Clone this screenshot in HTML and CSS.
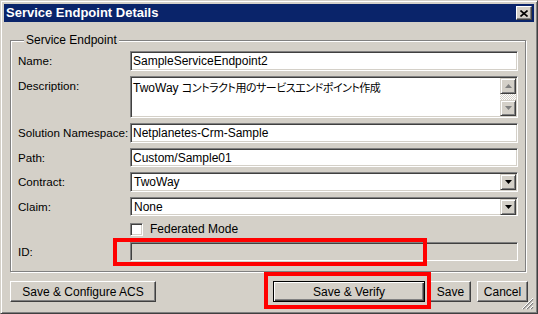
FILE: index.html
```html
<!DOCTYPE html>
<html lang="ja">
<head>
  <meta charset="UTF-8" />
  <title>Service Endpoint Details</title>
  <link rel="stylesheet" href="styles.css">
</head>
<body>

  <div class="window">
    <div class="titlebar">
      <span class="title">Service Endpoint Details</span>
      <button class="close-btn">
        <svg width="8" height="7" viewBox="0 0 8 7"><path d="M0.5 0.5L7.5 6.5M7.5 0.5L0.5 6.5" stroke="#000" stroke-width="1.6" fill="none"/></svg>
      </button>
    </div>

    <div class="content">
      <fieldset class="group">
        <legend>Service Endpoint</legend>
        <div class="form">
          <label>Name:</label>
          <div class="field">SampleServiceEndpoint2</div>

          <label>Description:</label>
          <div class="field memo">
            <div class="memo-text">TwoWay <span class="jp">コントラクト用のサービスエンドポイント作成</span></div>
            <div class="vscroll">
              <div class="sb-btn"><svg width="7" height="4" viewBox="0 0 7 4"><path d="M3.5 0L7 4H0Z" fill="#808080"/></svg></div>
              <div class="sb-track"></div>
              <div class="sb-btn"><svg width="7" height="4" viewBox="0 0 7 4"><path d="M0 0H7L3.5 4Z" fill="#808080"/></svg></div>
            </div>
          </div>

          <label>Solution Namespace:</label>
          <div class="field">Netplanetes-Crm-Sample</div>

          <label>Path:</label>
          <div class="field">Custom/Sample01</div>

          <label>Contract:</label>
          <div class="field select">
            <span>TwoWay</span>
            <div class="dd-btn"><svg width="7" height="4" viewBox="0 0 7 4"><path d="M0 0H7L3.5 4Z" fill="#000"/></svg></div>
          </div>

          <label>Claim:</label>
          <div class="field select">
            <span>None</span>
            <div class="dd-btn"><svg width="7" height="4" viewBox="0 0 7 4"><path d="M0 0H7L3.5 4Z" fill="#000"/></svg></div>
          </div>

          <span></span>
          <div class="check-row">
            <span class="checkbox"></span>
            <span>Federated Mode</span>
          </div>

          <label>ID:</label>
          <div class="field disabled"></div>
        </div>
      </fieldset>

      <div class="buttons">
        <button class="btn btn-acs">Save &amp; Configure ACS</button>
        <div class="right-buttons">
          <button class="btn btn-default btn-verify">Save &amp; Verify</button>
          <button class="btn btn-save">Save</button>
          <button class="btn btn-cancel">Cancel</button>
        </div>
      </div>
    </div>

    <!-- resize grip -->
    <svg class="grip" width="12" height="12" viewBox="0 0 12 12">
      <path d="M11 1L1 11M11 5L5 11M11 9L9 11" stroke="#808080" stroke-width="1.2"/>
      <path d="M11 0L0 11M11 4L4 11M11 8L8 11" stroke="#fff" stroke-width="1"/>
    </svg>

    <!-- red highlight marks -->
    <div class="mark mark-id"></div>
    <div class="mark mark-verify"></div>
  </div>

</body>
</html>
```

FILE: styles.css
```css
body {
  margin: 0;
  background-color: #d4d0c8;
  font-family: 'Liberation Sans', Arial, sans-serif;
  font-size: 12px;
  color: #000;
}

.window {
  position: relative;
  box-sizing: border-box;
  width: 538px;
  height: 314px;
  padding: 3px;
  background-color: #d4d0c8;
  border: 1px solid;
  border-color: #d4d0c8 #404040 #404040 #d4d0c8;
  box-shadow: inset 1px 1px #fff, inset -1px -1px #808080;
}

.titlebar {
  display: flex;
  align-items: center;
  justify-content: space-between;
  height: 18px;
  padding: 0 2px;
  background-color: #0a246a;
}

.title {
  color: #fff;
  font-weight: bold;
  font-size: 13px;
  line-height: 18px;
}

.close-btn {
  display: flex;
  align-items: center;
  justify-content: center;
  box-sizing: border-box;
  width: 16px;
  height: 14px;
  padding: 0;
  background: #d4d0c8;
  border: 1px solid;
  border-color: #fff #404040 #404040 #fff;
  box-shadow: inset -1px -1px #808080;
}

.content {
  padding: 11px 8px 0 6px;
}

.group {
  margin: 0;
  padding: 3px 7px 10px 7px;
  border: 1px solid #808080;
  box-shadow: 1px 1px 0 #fff, inset 1px 1px 0 #fff;
}

.group legend {
  margin-left: 6px;
  padding: 0 2px;
  line-height: 15px;
  background: #d4d0c8;
}

.form {
  display: grid;
  grid-template-columns: 112px 1fr;
  grid-template-rows: 20px 42px 20px 19px 20px 19px 16px 19px;
  row-gap: 5px;
}

.form label {
  padding-top: 3px;
  line-height: 14px;
  font-size: 11.6px;
  white-space: nowrap;
}

.field {
  box-sizing: border-box;
  display: flex;
  align-items: center;
  padding-left: 2px;
  background: #fff;
  border: 1px solid;
  border-color: #808080 #fff #fff #808080;
  box-shadow: inset 1px 1px #404040, inset -1px -1px #d4d0c8;
  white-space: nowrap;
}

.field.disabled {
  background: #d4d0c8;
}

.memo {
  align-items: stretch;
  padding: 1px 1px 1px 2px;
}

.memo-text {
  flex: 1;
  padding-top: 2px;
  line-height: 14px;
}

.jp {
  font-family: 'Noto Sans CJK JP', sans-serif;
  font-feature-settings: "palt";
  font-size: 11px;
  letter-spacing: -0.5px;
}

.vscroll {
  display: flex;
  flex-direction: column;
  width: 16px;
}

.sb-btn,
.dd-btn {
  display: flex;
  align-items: center;
  justify-content: center;
  box-sizing: border-box;
  width: 16px;
  height: 16px;
  background: #d4d0c8;
  border: 1px solid;
  border-color: #d4d0c8 #404040 #404040 #d4d0c8;
  box-shadow: inset 1px 1px #fff, inset -1px -1px #808080;
}

.sb-track {
  flex: 1;
  background-image: conic-gradient(#fff 25%, #d4d0c8 0 50%, #fff 0 75%, #d4d0c8 0);
  background-size: 2px 2px;
}

.select {
  justify-content: space-between;
  padding: 1px 1px 1px 3px;
}

.check-row {
  display: flex;
  align-items: center;
  gap: 7px;
}

.checkbox {
  box-sizing: border-box;
  width: 13px;
  height: 13px;
  background: #fff;
  border: 1px solid;
  border-color: #808080 #fff #fff #808080;
  box-shadow: inset 1px 1px #404040, inset -1px -1px #d4d0c8;
}

.buttons {
  display: flex;
  justify-content: space-between;
  margin: 9px -2px 0 0;
}

.right-buttons {
  display: flex;
  gap: 5px;
}

.btn {
  box-sizing: border-box;
  height: 21px;
  padding: 0;
  font-family: 'Liberation Sans', Arial, sans-serif;
  font-size: 12px;
  color: #000;
  background: #d4d0c8;
  border: 1px solid;
  border-color: #fff #404040 #404040 #fff;
  box-shadow: inset -1px -1px #808080;
}

.btn-default {
  border-color: #000;
  box-shadow: inset 1px 1px #fff, inset -1px -1px #404040, inset -2px -2px #808080;
}

.btn-acs { width: 146px; }
.btn-verify { width: 152px; }
.btn-save { width: 41px; }
.btn-cancel { width: 51px; margin-left: 1px; }

.grip {
  position: absolute;
  right: 3px;
  bottom: 3px;
}

.mark {
  position: absolute;
  box-sizing: border-box;
  border: 4px solid #ff0000;
}

.mark-id {
  left: 112px;
  top: 237px;
  width: 314px;
  height: 28px;
}

.mark-verify {
  left: 263px;
  top: 271px;
  width: 167px;
  height: 37px;
}
```
